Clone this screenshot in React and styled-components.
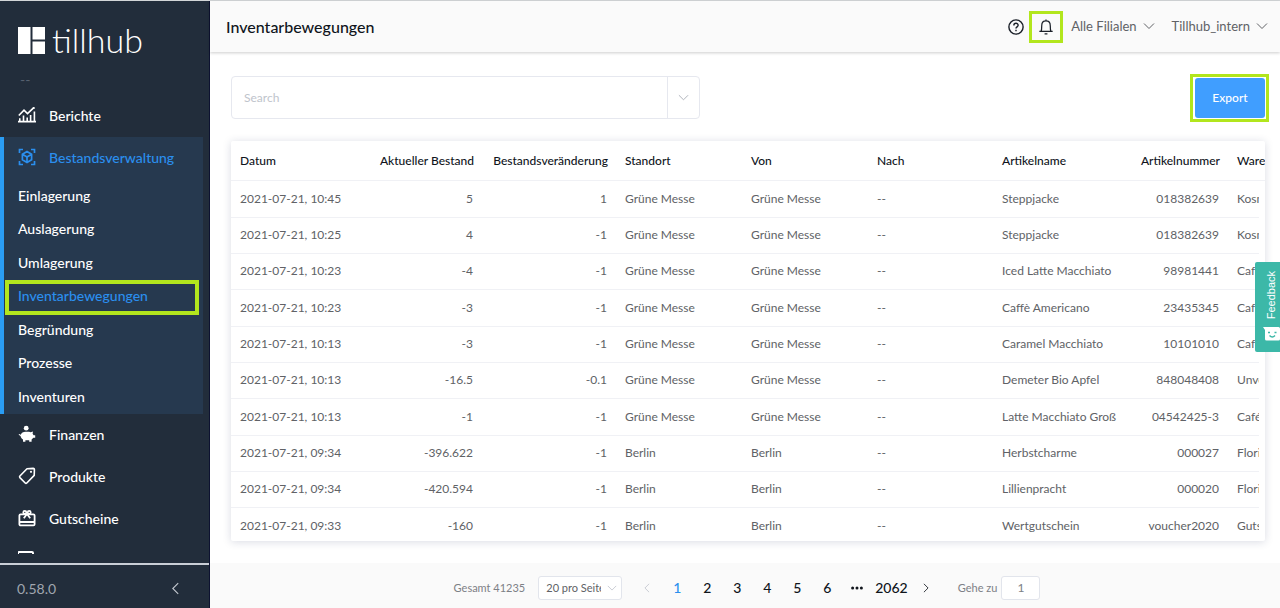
import React from "react";
import styled, { createGlobalStyle, css } from "styled-components";

const GlobalStyle = createGlobalStyle`
  * {
    box-sizing: border-box;
  }
  body {
    margin: 0;
    font-family: Lato, "Liberation Sans", sans-serif;
    font-size: 13px;
    color: #606266;
    background: #fff;
  }
  button, input, select {
    font-family: inherit;
    font-size: inherit;
    color: inherit;
  }
  button {
    padding: 0;
    border: 0;
    background: none;
    cursor: pointer;
  }
  a {
    color: inherit;
    text-decoration: none;
  }
  ul {
    margin: 0;
    padding: 0;
    list-style: none;
  }
`;

const marker = css`
  position: relative;
  &::after {
    content: "";
    position: absolute;
    border: 3px solid #b2e61d;
    pointer-events: none;
  }
`;

const Shell = styled.div`
  display: grid;
  grid-template-columns: 210px minmax(0, 1fr);
  height: 100vh;
  border-top: 1px solid #d3d6d8;
`;

const Sidebar = styled.aside`
  display: flex;
  flex-direction: column;
  min-height: 0;
  background: #222d3b;
  border-right: 1px solid #0d1230;
  color: #fff;
`;

const Logo = styled.a`
  display: flex;
  align-items: center;
  gap: 7px;
  height: 44px;
  margin: 17px 0 0 18px;
  font-size: 34px;
  font-weight: 300;
  line-height: 44px;
`;

const Account = styled.div`
  height: 33px;
  padding-left: 20px;
  color: #566170;
  font-size: 14px;
  line-height: 36px;
`;

const Nav = styled.nav`
  flex: 1;
  min-height: 0;
  overflow: hidden;
  margin-bottom: 9px;
`;

const NavLink = styled.a`
  display: flex;
  align-items: center;
  gap: 13px;
  height: 42px;
  padding: 0 0 2px 18px;
  font-size: 14px;
  font-weight: 500;
  color: ${({ $active }) => ($active ? "#2b8fee" : "#fff")};
`;

const NavGroup = styled.div`
  margin-right: 6px;
  background: #26394f;
  box-shadow: inset 4px 0 #2a9df4;
`;

const SubItem = styled.li`
  display: flex;
  height: 33px;
  &:nth-child(odd) {
    height: 34px;
  }
`;

const SubLink = styled.a`
  display: flex;
  align-items: center;
  flex: 1;
  padding: 0 0 2px 18px;
  font-size: 14px;
  font-weight: 500;
  color: ${({ $active }) => ($active ? "#2b8fee" : "#fff")};
  ${({ $active }) =>
    $active &&
    css`
      ${marker}
      &::after {
        inset: 0 4px -2px 5px;
        border-width: 4px;
      }
    `}
`;

const Version = styled.div`
  display: flex;
  align-items: center;
  justify-content: space-between;
  height: 45px;
  padding: 4px 27px 0 17px;
  border-top: 2px solid #c9ced6;
  font-size: 14px;
  color: #a0a6af;
`;

const Main = styled.main`
  display: flex;
  flex-direction: column;
  min-width: 0;
  min-height: 0;
`;

const TopBar = styled.header`
  display: flex;
  align-items: center;
  justify-content: space-between;
  height: 51px;
  padding: 0 12px 0 16px;
  background: #fafafa;
  box-shadow: 0 1px 3px rgba(0, 0, 0, 0.2);
`;

const Title = styled.h1`
  margin: 0;
  font-size: 16px;
  font-weight: 500;
  color: #10151c;
`;

const TopActions = styled.div`
  display: flex;
  align-items: center;
  gap: 17px;
`;

const IconGroup = styled.div`
  display: flex;
  gap: 14px;
`;

const IconButton = styled.button`
  display: flex;
  color: ${({ $light }) => ($light ? "#c3c8cf" : "#1b2029")};
  ${({ $marked }) =>
    $marked &&
    css`
      ${marker}
      &::after {
        inset: -8px -9px;
      }
    `}
`;

const Dropdown = styled.button`
  display: flex;
  align-items: center;
  gap: 6px;
  padding-bottom: 2px;
  font-size: 13px;
`;

const Content = styled.div`
  display: flex;
  flex-direction: column;
  flex: 1;
  gap: 22px;
  min-height: 0;
  padding: 24px 15px 22px 21px;
`;

const Toolbar = styled.div`
  display: flex;
  align-items: center;
  justify-content: space-between;
`;

const SearchBox = styled.div`
  display: flex;
  width: 469px;
  height: 43px;
  border: 1px solid #e6e8ef;
  border-radius: 4px;
  input {
    flex: 1;
    min-width: 0;
    padding: 0 12px;
    border: 0;
    outline: 0;
    background: none;
    font-size: 12px;
  }
  input::placeholder {
    color: #c0c4cc;
  }
  button {
    display: flex;
    align-items: center;
    justify-content: center;
    width: 32px;
    border-left: 1px solid #e6e8ef;
    color: #a8adb6;
  }
`;

const ExportButton = styled.button`
  width: 70px;
  height: 40px;
  border-radius: 3px;
  background: #409eff;
  color: #fff;
  font-size: 12px;
  font-weight: 500;
  ${marker}
  &::after {
    inset: -4px -4px -4px -5px;
  }
`;

const Card = styled.div`
  flex: 1;
  min-height: 0;
  overflow: hidden;
  border-radius: 2px;
  background: #fff;
  box-shadow: 0 1px 9px rgba(30, 40, 90, 0.17);
`;

const Table = styled.table`
  width: 100%;
  table-layout: fixed;
  border-collapse: separate;
  border-spacing: 0;
  th,
  td {
    padding: 0 9px;
    border-bottom: 1px solid #f0f1f5;
    white-space: nowrap;
    text-align: left;
  }
  th {
    height: 40px;
    font-size: 12px;
    font-weight: 500;
    color: #10151c;
  }
  td {
    height: 36px;
    padding-bottom: 2px;
    font-size: 12px;
  }
  tr:nth-child(3n + 1) td {
    height: 37px;
  }
  td:last-child {
    padding-right: 0;
    overflow: hidden;
  }
  th:last-child {
    padding-right: 0;
  }
  th.number {
    padding-right: 8px;
    text-align: right;
  }
  td.number {
    padding-right: 9px;
    text-align: right;
  }
`;

const Footer = styled.footer`
  display: flex;
  align-items: center;
  justify-content: center;
  height: 45px;
  padding: 4px 0 0 4px;
  background: #fafafa;
  font-size: 11px;
  color: #7d8086;
`;

const PageSize = styled.label`
  position: relative;
  display: flex;
  margin: 0 10px 0 13px;
  select {
    appearance: none;
    width: 84px;
    height: 24px;
    padding: 0 20px 0 7px;
    border: 1px solid #e2e5ec;
    border-radius: 3px;
    background: #fff;
    color: #606266;
  }
  svg {
    position: absolute;
    top: 7px;
    right: 5px;
    color: #c0c4cc;
    pointer-events: none;
  }
`;

const Pages = styled.ul`
  display: flex;
  align-items: center;
`;

const PageButton = styled.button`
  display: flex;
  align-items: center;
  justify-content: center;
  min-width: 30px;
  height: 24px;
  padding: 0 3px;
  font-size: 14px;
  font-weight: 500;
  color: ${({ $active, $muted }) =>
    $active ? "#2b8fee" : $muted ? "#c0c4cc" : "#10151c"};
`;

const GoTo = styled.label`
  display: flex;
  align-items: center;
  gap: 4px;
  margin-left: 17px;
  input {
    width: 39px;
    height: 24px;
    padding: 0;
    border: 1px solid #e2e5ec;
    border-radius: 3px;
    background: #fff;
    text-align: center;
    font-size: 12px;
  }
`;

const Feedback = styled.button`
  position: fixed;
  top: 262px;
  right: 0;
  display: flex;
  flex-direction: column;
  align-items: center;
  justify-content: space-between;
  width: 25px;
  height: 90px;
  padding: 9px 0 11px 7px;
  border-radius: 2px 0 0 2px;
  background: #3cb8a8;
  color: #fff;
  font-family: "Liberation Sans", Arial, sans-serif;
  font-size: 11px;
  span {
    writing-mode: vertical-rl;
    transform: rotate(180deg);
  }
`;

function Chevron({ size = 12, direction = "down" }) {
  const paths = {
    down: "M1 3.5 6 8.5 11 3.5",
    left: "M8.5 1 3.5 6 8.5 11",
    right: "M3.5 1 8.5 6 3.5 11",
  };
  return (
    <svg width={size} height={size} viewBox="0 0 12 12" fill="none" stroke="currentColor">
      <path d={paths[direction]} />
    </svg>
  );
}

function Icon({ children, size = 18, strokeWidth = 1.6 }) {
  return (
    <svg
      width={size}
      height={size}
      viewBox="0 0 18 18"
      fill="none"
      stroke="currentColor"
      strokeWidth={strokeWidth}
    >
      {children}
    </svg>
  );
}

const icons = {
  reports: (
    <Icon>
      <path d="M.8 9.5 6 4.2 9.5 7.6 15.8 1.6" />
      <circle cx="15.8" cy="2" r="1.1" fill="currentColor" stroke="none" />
      <path d="M0 15.6H18M1.8 15V12.2M5.5 15V9.5M9.2 15V11.5M12.6 15V9M16.4 15V5.5" />
    </Icon>
  ),
  stock: (
    <Icon strokeWidth={1.7}>
      <path d="M1.5 5V1.5H5M13 1.5H16.5V5M16.5 13V16.5H13M5 16.5H1.5V13" />
      <path d="M9 3.6 13.6 6.3V11.7L9 14.4 4.4 11.7V6.3ZM4.4 6.3 9 9 13.6 6.3M9 9V14.4" />
    </Icon>
  ),
  finance: (
    <Icon>
      <circle cx="8.2" cy="3.2" r="2.4" fill="currentColor" stroke="none" />
      <path
        d="M3.6 8.2C5 6.9 10 6.4 12.6 7.3L15 6.4 14.6 8.8 15.6 10.2H17.2V12.8H15.4L13.6 14.4V16.8H11.2V15.2H7.4V16.8H5V14.6C3.4 13.6 2.7 12.2 2.6 11L.6 9.8 1.2 9 2.8 9.8Z"
        fill="currentColor"
        stroke="none"
      />
    </Icon>
  ),
  products: (
    <Icon>
      <path
        d="M9 1.8 15.2 1.4Q16.4 1.4 16.4 2.6L16.2 8.4 8.8 16Q8 16.7 7.2 16L1.9 10.6Q1.2 9.8 1.9 9Z"
        strokeLinejoin="round"
      />
      <circle cx="13" cy="4.8" r="1.1" fill="currentColor" stroke="none" />
    </Icon>
  ),
  vouchers: (
    <Icon strokeWidth={1.8}>
      <rect x="1.4" y="5.4" width="15.2" height="11" rx="1.2" />
      <path d="M1.4 13H16.6M9 5 5.8 9.2M9 5 12.2 9.2" />
      <circle cx="6.8" cy="3.4" r="1.5" />
      <circle cx="11.2" cy="3.4" r="1.5" />
    </Icon>
  ),
  cards: (
    <Icon strokeWidth={2}>
      <rect x="0" y="1" width="15" height="12" rx="1" />
    </Icon>
  ),
};

const stockLinks = [
  "Einlagerung",
  "Auslagerung",
  "Umlagerung",
  "Inventarbewegungen",
  "Begründung",
  "Prozesse",
  "Inventuren",
];

const columns = [
  { label: "Datum", width: 126 },
  { label: "Aktueller Bestand", width: 125, number: true },
  { label: "Bestandsveränderung", width: 134, number: true },
  { label: "Standort", width: 126 },
  { label: "Von", width: 126 },
  { label: "Nach", width: 125 },
  { label: "Artikelname", width: 126 },
  { label: "Artikelnummer", width: 109, number: true },
  { label: "Warengruppe" },
];

const rows = [
  ["2021-07-21, 10:45", "5", "1", "Grüne Messe", "Grüne Messe", "--", "Steppjacke", "018382639", "Kosmetik"],
  ["2021-07-21, 10:25", "4", "-1", "Grüne Messe", "Grüne Messe", "--", "Steppjacke", "018382639", "Kosmetik"],
  ["2021-07-21, 10:23", "-4", "-1", "Grüne Messe", "Grüne Messe", "--", "Iced Latte Macchiato", "98981441", "Café"],
  ["2021-07-21, 10:23", "-3", "-1", "Grüne Messe", "Grüne Messe", "--", "Caffè Americano", "23435345", "Café"],
  ["2021-07-21, 10:13", "-3", "-1", "Grüne Messe", "Grüne Messe", "--", "Caramel Macchiato", "10101010", "Café"],
  ["2021-07-21, 10:13", "-16.5", "-0.1", "Grüne Messe", "Grüne Messe", "--", "Demeter Bio Apfel", "848048408", "Unverpackt"],
  ["2021-07-21, 10:13", "-1", "-1", "Grüne Messe", "Grüne Messe", "--", "Latte Macchiato Groß", "04542425-3", "Café"],
  ["2021-07-21, 09:34", "-396.622", "-1", "Berlin", "Berlin", "--", "Herbstcharme", "000027", "Floristik"],
  ["2021-07-21, 09:34", "-420.594", "-1", "Berlin", "Berlin", "--", "Lillienpracht", "000020", "Floristik"],
  ["2021-07-21, 09:33", "-160", "-1", "Berlin", "Berlin", "--", "Wertgutschein", "voucher2020", "Gutschein"],
];

const pages = ["1", "2", "3", "4", "5", "6"];

function SideMenu() {
  return (
    <Sidebar>
      <Logo href="#">
        <svg width="27" height="27" viewBox="0 0 27 27" fill="#fff">
          <path d="M0 0H12.5V27H0ZM14.5 0H27V12.5H14.5ZM14.5 14.5H27V27H14.5Z" />
        </svg>
        tillhub
      </Logo>
      <Account>--</Account>
      <Nav>
        <NavLink href="#">
          {icons.reports}
          Berichte
        </NavLink>
        <NavGroup>
          <NavLink href="#" $active>
            {icons.stock}
            Bestandsverwaltung
          </NavLink>
          <ul>
            {stockLinks.map((label) => (
              <SubItem key={label}>
                <SubLink href="#" $active={label === "Inventarbewegungen"}>
                  {label}
                </SubLink>
              </SubItem>
            ))}
          </ul>
        </NavGroup>
        <NavLink href="#">
          {icons.finance}
          Finanzen
        </NavLink>
        <NavLink href="#">
          {icons.products}
          Produkte
        </NavLink>
        <NavLink href="#">
          {icons.vouchers}
          Gutscheine
        </NavLink>
        <NavLink href="#">{icons.cards}</NavLink>
      </Nav>
      <Version>
        0.58.0
        <IconButton aria-label="Menü einklappen" $light>
          <Chevron size={13} direction="left" />
        </IconButton>
      </Version>
    </Sidebar>
  );
}

function InventoryTable() {
  return (
    <Table>
      <colgroup>
        {columns.map(({ label, width }) => (
          <col key={label} width={width} />
        ))}
        {/* the header runs over this gutter, the body cells stop before it */}
        <col width="6" />
      </colgroup>
      <thead>
        <tr>
          {columns.map(({ label, number }, i) => (
            <th
              key={label}
              className={number ? "number" : undefined}
              colSpan={i === columns.length - 1 ? 2 : 1}
            >
              {label}
            </th>
          ))}
        </tr>
      </thead>
      <tbody>
        {rows.map((row, r) => (
          <tr key={r}>
            {row.map((value, i) => (
              <td key={i} className={columns[i].number ? "number" : undefined}>
                {value}
              </td>
            ))}
          </tr>
        ))}
      </tbody>
    </Table>
  );
}

function Pagination() {
  return (
    <Footer>
      <span>Gesamt 41235</span>
      <PageSize>
        <select aria-label="Einträge pro Seite">
          <option>20 pro Seite</option>
        </select>
        <Chevron size={10} />
      </PageSize>
      <Pages>
        <li>
          <PageButton aria-label="Zurück" $muted>
            <Chevron size={10} direction="left" />
          </PageButton>
        </li>
        {pages.map((page) => (
          <li key={page}>
            <PageButton $active={page === "1"}>{page}</PageButton>
          </li>
        ))}
        <li>
          <PageButton aria-label="Weitere Seiten">
            <svg width="12" height="4" viewBox="0 0 12 4" fill="currentColor">
              <circle cx="1.6" cy="2" r="1.5" />
              <circle cx="6" cy="2" r="1.5" />
              <circle cx="10.4" cy="2" r="1.5" />
            </svg>
          </PageButton>
        </li>
        <li>
          <PageButton>2062</PageButton>
        </li>
        <li>
          <PageButton aria-label="Weiter">
            <Chevron size={10} direction="right" />
          </PageButton>
        </li>
      </Pages>
      <GoTo>
        Gehe zu
        <input type="text" defaultValue="1" />
      </GoTo>
    </Footer>
  );
}

export default function App() {
  return (
    <>
      <GlobalStyle />
      <Shell>
        <SideMenu />
        <Main>
          <TopBar>
            <Title>Inventarbewegungen</Title>
            <TopActions>
              <IconGroup>
                <IconButton aria-label="Hilfe">
                  <Icon size={16}>
                    <circle cx="9" cy="9" r="8" />
                    <path d="M6.6 7.2C6.6 4 11.4 4 11.4 7.1 11.4 8.9 9 8.9 9 10.8M9 12.2V13.8" />
                  </Icon>
                </IconButton>
                <IconButton aria-label="Benachrichtigungen" $marked>
                  <Icon size={16} strokeWidth={1.4}>
                    <path d="M1.5 14H16.5M3.4 14C4.2 12.5 4.2 11 4.2 7.5 4.2 4.5 6 2.2 9 2.2S13.8 4.5 13.8 7.5C13.8 11 13.8 12.5 14.6 14M9 2.2V.5M7.4 16.8H10.6" />
                  </Icon>
                </IconButton>
              </IconGroup>
              <Dropdown aria-haspopup="menu">
                Alle Filialen
                <Chevron />
              </Dropdown>
              <Dropdown aria-haspopup="menu">
                Tillhub_intern
                <Chevron />
              </Dropdown>
            </TopActions>
          </TopBar>
          <Content>
            <Toolbar>
              <SearchBox>
                <input type="text" placeholder="Search" aria-label="Search" />
                <button aria-label="Filter">
                  <Chevron size={11} />
                </button>
              </SearchBox>
              <ExportButton>Export</ExportButton>
            </Toolbar>
            <Card>
              <InventoryTable />
            </Card>
          </Content>
          <Pagination />
        </Main>
      </Shell>
      <Feedback>
        <span>Feedback</span>
        <svg width="17" height="14" viewBox="0 0 17 14">
          <path d="M0 0H15.5Q17 0 17 1.5V12Q17 13.5 15.5 13.5H3.5Q2 13.5 2 12V3Z" fill="#fff" />
          <path
            d="M5 5.5H7M11.5 5.5H13.5M6.5 8.5Q9.3 11.5 12 8.5"
            fill="none"
            stroke="#3cb8a8"
            strokeWidth="1.4"
          />
        </svg>
      </Feedback>
    </>
  );
}
